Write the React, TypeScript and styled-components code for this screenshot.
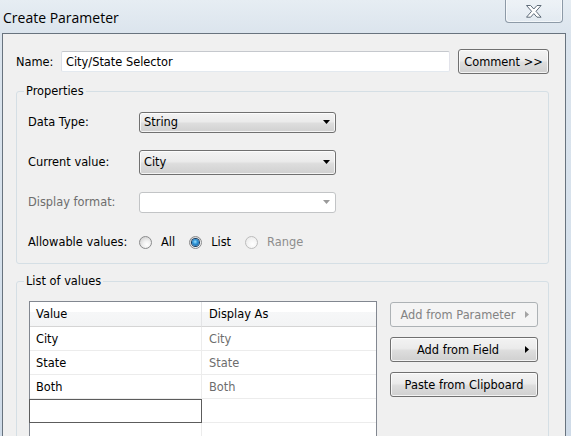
import React from "react";
import styled, { createGlobalStyle } from "styled-components";

const GlobalStyle = createGlobalStyle`
  html, body {
    margin: 0;
    padding: 0;
    overflow: hidden;
  }
  body {
    font-family: "DejaVu Sans", Verdana, sans-serif;
    font-size: 11.4px;
    color: #000;
  }
`;

const Window = styled.div`
  width: 571px;
  height: 436px;
  display: flex;
  flex-direction: column;
  overflow: hidden;
  background: linear-gradient(180deg, #e6edf3 0%, #dbe4ed 8%, #d6e1ec 60%, #cfdbe8 100%);
`;

const TitleBar = styled.div`
  height: 33px;
  flex-shrink: 0;
  display: flex;
  align-items: flex-start;
  justify-content: space-between;
`;

const Title = styled.div`
  font-family: "Open Sans", sans-serif;
  font-size: 14px;
  line-height: 20px;
  padding: 8px 0 0 3px;
`;

const CloseButton = styled.div`
  width: 58px;
  height: 23px;
  margin-right: 8px;
  box-sizing: border-box;
  border: 1px solid #8d9aa7;
  border-top: none;
  border-radius: 0 0 4px 4px;
  background: linear-gradient(180deg, rgba(255, 255, 255, 0.3), rgba(255, 255, 255, 0.1));
  box-shadow: inset 1px -1px 0 rgba(255, 255, 255, 0.6), inset -1px 0 0 rgba(255, 255, 255, 0.6);
  display: flex;
  align-items: center;
  justify-content: center;
`;

const Frame = styled.div`
  flex: 1;
  display: flex;
  padding: 0 5px 0 2px;
  min-height: 0;
`;

const Client = styled.div`
  flex: 1;
  min-height: 0;
  overflow: hidden;
  background: #f0f0f0;
  border: 1px solid #68737e;
  border-bottom: none;
  padding: 15px 16px 0 13px;
  display: flex;
  flex-direction: column;
`;

const NameRow = styled.div`
  display: flex;
  align-items: center;
  height: 25px;
`;

const NameLabel = styled.span`
  width: 45px;
`;

const TextInput = styled.input`
  width: 389px;
  height: 21px;
  box-sizing: border-box;
  margin: 0 8px 0 0;
  padding: 0 0 0 4px;
  font: inherit;
  color: #000;
  background: #fff;
  border: 1px solid;
  border-color: #c5c8cd #e2e3ea #e3e9ef #dbdfe6;
  border-radius: 2px;
  outline: none;
`;

const PushButton = styled.button<{ $width: number }>`
  box-sizing: border-box;
  width: ${(p) => p.$width}px;
  height: 25px;
  margin: 0;
  padding: 0;
  font: inherit;
  color: #000;
  border: 1px solid #707070;
  border-radius: 3px;
  background: linear-gradient(180deg, #f3f3f3 0%, #ebebeb 45%, #dddddd 55%, #d0d0d0 100%);
  box-shadow: inset 0 0 0 1px rgba(255, 255, 255, 0.75);
  display: flex;
  align-items: center;
  justify-content: center;

  &:disabled {
    color: #838383;
    border-color: #adb2b5;
    background: #f4f4f4;
    box-shadow: none;
  }
`;

const MenuButton = styled(PushButton)`
  padding-right: 8px;
`;

const MenuLabel = styled.span`
  flex: 1;
  text-align: center;
`;

const GroupBox = styled.fieldset<{ $gap: number }>`
  margin: ${(p) => p.$gap}px 0 0;
  padding: 0;
  min-width: 0;
  border: 1px solid #d5dfe5;
  border-radius: 3px;
`;

const GroupLegend = styled.legend`
  margin-left: 7px;
  padding: 0 2px;
  line-height: 14px;
`;

const PropertiesGrid = styled.div`
  display: grid;
  grid-template-columns: 111px 197px;
  grid-auto-rows: 40px;
  align-items: center;
  padding: 4px 0 1px 11px;
`;

const FieldLabel = styled.span<{ $muted?: boolean }>`
  color: ${(p) => (p.$muted ? "#6d6d6d" : "#000")};
`;

const Combo = styled.div<{ $height?: number; $disabled?: boolean }>`
  box-sizing: border-box;
  height: ${(p) => p.$height ?? 21}px;
  border: 1px solid ${(p) => (p.$disabled ? "#c2c4c6" : "#707070")};
  border-radius: 3px;
  background: ${(p) =>
    p.$disabled
      ? "#fff"
      : "linear-gradient(180deg, #f3f3f3 0%, #ebebeb 45%, #dddddd 55%, #d0d0d0 100%)"};
  box-shadow: ${(p) => (p.$disabled ? "none" : "inset 0 0 0 1px rgba(255,255,255,0.75)")};
  display: flex;
  align-items: center;
  padding: 0 5px 0 4px;
`;

const ComboText = styled.span`
  flex: 1;
`;

const RadioGroup = styled.div`
  display: flex;
  align-items: center;
  gap: 14px;
  white-space: nowrap;
`;

const RadioOption = styled.label<{ $disabled?: boolean }>`
  display: flex;
  align-items: center;
  gap: 9px;
  color: ${(p) => (p.$disabled ? "#8d8d8d" : "#000")};
`;

const RadioCircle = styled.span<{ $checked?: boolean; $disabled?: boolean }>`
  width: 13px;
  height: 13px;
  box-sizing: border-box;
  border-radius: 50%;
  border: 1px solid ${(p) => (p.$disabled ? "#bcbcbc" : "#8a8b8c")};
  background: ${(p) =>
    p.$disabled
      ? "radial-gradient(circle at 60% 65%, #ffffff 0%, #f6f6f6 40%, #e6e6e6 100%)"
      : "radial-gradient(circle at 62% 68%, #ffffff 0%, #f1f1f1 35%, #d4d4d4 80%, #c6c6c6 100%)"};
  display: flex;
  align-items: center;
  justify-content: center;

  &::after {
    content: "";
    display: ${(p) => (p.$checked ? "block" : "none")};
    width: 7px;
    height: 7px;
    border-radius: 50%;
    background: radial-gradient(circle at 45% 40%, #9ce3ff 0%, #2f93d6 40%, #0c4f8c 100%);
    box-shadow: 0 0 0 1px #173c61;
  }
`;

const ListArea = styled.div`
  display: flex;
  align-items: flex-start;
  gap: 13px;
  padding: 13px 10px 0 12px;
`;

const ValuesTable = styled.div`
  flex-shrink: 0;
  width: 348px;
  box-sizing: border-box;
  border: 1px solid #828790;
  background: #fff;
  display: grid;
  grid-template-columns: 172px 1fr;
  grid-template-rows: 25px;
  grid-auto-rows: 24px;
`;

const HeaderCell = styled.div<{ $first?: boolean }>`
  display: flex;
  align-items: center;
  padding-left: ${(p) => (p.$first ? 6 : 7)}px;
  background: linear-gradient(180deg, #ffffff 0%, #ffffff 40%, #f6f7f8 40%, #f3f4f5 100%);
  border-bottom: 1px solid #d5d5d5;
  border-right: ${(p) => (p.$first ? "1px solid #e3e4e6" : "none")};
`;

const Cell = styled.div<{ $first?: boolean; $muted?: boolean; $editing?: boolean }>`
  display: flex;
  align-items: center;
  padding-left: ${(p) => (p.$first ? 6 : 7)}px;
  color: ${(p) => (p.$muted ? "#6d6d6d" : "#000")};
  border-bottom: 1px solid #ececec;
  border-right: ${(p) => (p.$first ? "1px solid #ececec" : "none")};
  outline: ${(p) => (p.$editing ? "1px solid #5c5c5c" : "none")};
  outline-offset: -1px;
  margin-left: ${(p) => (p.$editing ? "-1px" : "0")};
`;

const ButtonColumn = styled.div`
  display: flex;
  flex-direction: column;
  gap: 10px;
  padding-top: 1px;
`;

const CloseGlyph = () => (
  <svg width="16" height="13" viewBox="0 0 16 13">
    <polygon
      points="0.5,0.5 4.6,0.5 7.8,4 11,0.5 15.1,0.5 10,6.3 15.1,12.2 11,12.2 7.8,8.6 4.6,12.2 0.5,12.2 5.6,6.3"
      fill="#ffffff"
      stroke="#5f6c79"
      strokeWidth="1"
      strokeLinejoin="round"
    />
  </svg>
);

const DownArrow = ({ color = "#000" }: { color?: string }) => (
  <svg width="7" height="4" viewBox="0 0 7 4">
    <polygon points="0,0 7,0 3.5,4" fill={color} />
  </svg>
);

const RightArrow = ({ color = "#000" }: { color?: string }) => (
  <svg width="4" height="7" viewBox="0 0 4 7">
    <polygon points="0,0 4,3.5 0,7" fill={color} />
  </svg>
);

const rows = [
  { value: "City", display: "City" },
  { value: "State", display: "State" },
  { value: "Both", display: "Both" },
];

export default function App() {
  return (
    <>
      <GlobalStyle />
      <Window>
        <TitleBar>
          <Title>Create Parameter</Title>
          <CloseButton>
            <CloseGlyph />
          </CloseButton>
        </TitleBar>
        <Frame>
          <Client>
            <NameRow>
              <NameLabel>Name:</NameLabel>
              <TextInput defaultValue="City/State Selector" />
              <PushButton $width={91}>Comment &gt;&gt;</PushButton>
            </NameRow>

            <GroupBox $gap={10}>
              <GroupLegend>Properties</GroupLegend>
              <PropertiesGrid>
                <FieldLabel>Data Type:</FieldLabel>
                <Combo>
                  <ComboText>String</ComboText>
                  <DownArrow />
                </Combo>

                <FieldLabel>Current value:</FieldLabel>
                <Combo $height={25}>
                  <ComboText>City</ComboText>
                  <DownArrow />
                </Combo>

                <FieldLabel $muted>Display format:</FieldLabel>
                <Combo $disabled>
                  <ComboText />
                  <DownArrow color="#9a9a9a" />
                </Combo>

                <FieldLabel>Allowable values:</FieldLabel>
                <RadioGroup>
                  <RadioOption>
                    <RadioCircle />
                    All
                  </RadioOption>
                  <RadioOption>
                    <RadioCircle $checked />
                    List
                  </RadioOption>
                  <RadioOption $disabled>
                    <RadioCircle $disabled />
                    Range
                  </RadioOption>
                </RadioGroup>
              </PropertiesGrid>
            </GroupBox>

            <GroupBox $gap={10}>
              <GroupLegend>List of values</GroupLegend>
              <ListArea>
                <ValuesTable>
                  <HeaderCell $first>Value</HeaderCell>
                  <HeaderCell>Display As</HeaderCell>
                  {rows.map((r) => (
                    <React.Fragment key={r.value}>
                      <Cell $first>{r.value}</Cell>
                      <Cell $muted>{r.display}</Cell>
                    </React.Fragment>
                  ))}
                  <Cell $first $editing />
                  <Cell />
                  <Cell $first />
                  <Cell />
                  <Cell $first />
                  <Cell />
                </ValuesTable>
                <ButtonColumn>
                  <MenuButton $width={148} disabled>
                    <MenuLabel>Add from Parameter</MenuLabel>
                    <RightArrow color="#a3a3a3" />
                  </MenuButton>
                  <MenuButton $width={148}>
                    <MenuLabel>Add from Field</MenuLabel>
                    <RightArrow />
                  </MenuButton>
                  <PushButton $width={148}>Paste from Clipboard</PushButton>
                </ButtonColumn>
              </ListArea>
            </GroupBox>
          </Client>
        </Frame>
      </Window>
    </>
  );
}
